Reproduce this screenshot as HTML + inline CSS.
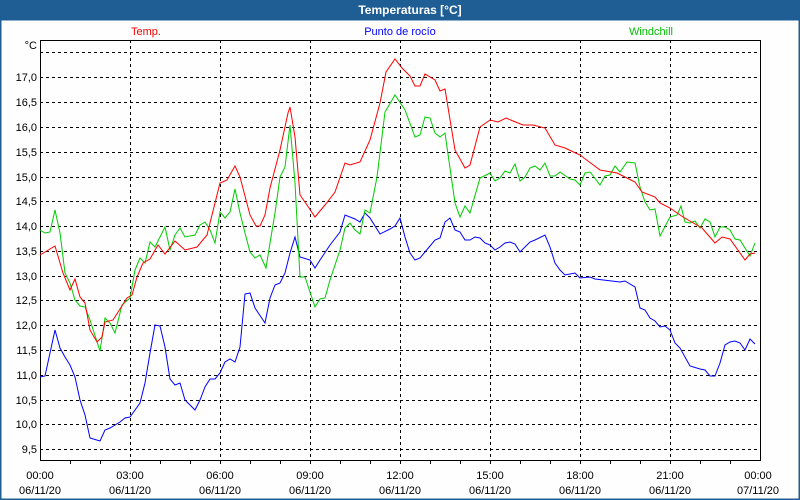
<!DOCTYPE html>
<html><head><meta charset="utf-8"><style>
html,body{margin:0;padding:0;background:#fff;}
svg{display:block;font-family:"Liberation Sans","DejaVu Sans",sans-serif;}
</style></head><body>
<svg width="800" height="500" viewBox="0 0 800 500" xmlns="http://www.w3.org/2000/svg">
<rect x="0" y="0" width="800" height="500" fill="#fdfefd"/>
<rect x="0" y="0" width="800" height="20" fill="#1e5e95"/>
<rect x="0.5" y="19.5" width="799" height="480" fill="none" stroke="#1e5e95" stroke-width="2"/>
<text x="410" y="14" fill="#fff" font-size="12" font-weight="bold" text-anchor="middle">Temperaturas [°C]</text>
<text x="146" y="35" fill="#ff0000" font-size="11" text-anchor="middle">Temp.</text>
<text x="400" y="35" fill="#0000ff" font-size="11" text-anchor="middle">Punto de rocío</text>
<text x="651" y="35" fill="#00c000" font-size="11" text-anchor="middle">Windchill</text>
<g stroke="#000" stroke-width="1" stroke-dasharray="3,3" fill="none">
<path d="M40 52.5H760M40 77.5H760M40 102.5H760M40 127.5H760M40 152.5H760M40 177.5H760M40 201.5H760M40 226.5H760M40 251.5H760M40 276.5H760M40 300.5H760M40 325.5H760M40 350.5H760M40 375.5H760M40 400.5H760M40 424.5H760M40 449.5H760"/>
<path d="M130.5 40V460M220.5 40V460M310.5 40V460M400.5 40V460M490.5 40V460M580.5 40V460M670.5 40V460"/>
</g>
<rect x="40.5" y="40.5" width="720" height="420" fill="none" stroke="#000" stroke-width="1"/>
<g stroke="#000" stroke-width="1">
<path d="M70.5 460v4M100.5 460v4M130.5 460v4M160.5 460v4M190.5 460v4M220.5 460v4M250.5 460v4M280.5 460v4M310.5 460v4M340.5 460v4M370.5 460v4M400.5 460v4M430.5 460v4M460.5 460v4M490.5 460v4M520.5 460v4M550.5 460v4M580.5 460v4M610.5 460v4M640.5 460v4M670.5 460v4M700.5 460v4M730.5 460v4"/>
</g>
<g font-size="11" fill="#000" text-anchor="end">
<text x="37" y="49">°C</text>
<text x="37" y="81">17,0</text><text x="37" y="106">16,5</text><text x="37" y="131">16,0</text>
<text x="37" y="156">15,5</text><text x="37" y="181">15,0</text><text x="37" y="205">14,5</text>
<text x="37" y="230">14,0</text><text x="37" y="255">13,5</text><text x="37" y="280">13,0</text>
<text x="37" y="304">12,5</text><text x="37" y="329">12,0</text><text x="37" y="354">11,5</text>
<text x="37" y="379">11,0</text><text x="37" y="404">10,5</text><text x="37" y="428">10,0</text>
<text x="37" y="453">9,5</text>
</g>
<g font-size="11" fill="#000" text-anchor="middle">
<text x="40" y="479">00:00</text><text x="40" y="494">06/11/20</text>
<text x="130" y="479">03:00</text><text x="130" y="494">06/11/20</text>
<text x="220" y="479">06:00</text><text x="220" y="494">06/11/20</text>
<text x="310" y="479">09:00</text><text x="310" y="494">06/11/20</text>
<text x="400" y="479">12:00</text><text x="400" y="494">06/11/20</text>
<text x="490" y="479">15:00</text><text x="490" y="494">06/11/20</text>
<text x="580" y="479">18:00</text><text x="580" y="494">06/11/20</text>
<text x="670" y="479">21:00</text><text x="670" y="494">06/11/20</text>
<text x="758" y="479">00:00</text><text x="758" y="494">07/11/20</text>
</g>
<polyline fill="none" stroke="#0000ff" stroke-width="1" points="40,377 45,376 55,330 60,348 65,357 70,365 75,377 80,400 85,415 90,438 100,441 105,430 110,428 120,422 125,418 130,417 140,403 145,383 150,353 155,325 160,326 165,347 170,379 175,385 180,383 185,400 195,410 200,400 205,387 210,379 215,379 220,373 225,362 230,359 235,362 240,347 245,294 250,293 255,308 265,323 270,298 275,285 280,283 285,273 290,253 295,237 300,257 310,260 315,268 320,260 330,245 340,232 345,215 355,219 360,222 365,213 370,218 380,234 390,229 395,226 400,218 405,237 410,253 415,260 420,258 425,252 435,240 440,238 445,222 450,218 455,230 460,232 465,240 470,240 475,237 480,238 485,243 490,245 495,250 500,247 505,243 510,242 515,244 520,252 530,242 535,240 545,235 550,247 555,263 560,270 565,275 575,273 580,278 590,277 595,279 620,282 625,281 635,287 640,308 645,310 650,318 655,321 660,327 665,326 670,330 675,343 680,348 690,366 700,369 705,370 710,376 715,376 720,363 725,345 730,342 735,341 740,343 745,350 750,339 755,344"/>
<polyline fill="none" stroke="#00cc00" stroke-width="1" points="40,230 45,233 50,232 55,210 60,233 65,273 70,283 75,300 80,306 85,307 90,320 100,351 105,318 110,323 115,333 122,305 130,298 135,270 140,258 145,263 150,242 155,247 165,227 170,250 175,235 180,228 185,237 195,235 200,225 205,222 210,230 215,243 220,212 225,218 230,212 235,189 240,213 245,233 250,252 255,258 260,255 266,268 270,243 275,213 280,177 285,167 290,125 295,183 300,277 305,277 315,307 320,299 325,298 330,280 340,250 345,228 350,223 355,230 360,234 365,210 370,213 377,177 385,112 395,95 405,110 415,137 420,135 425,117 430,118 435,133 440,137 445,133 455,203 460,217 465,206 470,213 480,178 490,173 495,181 500,178 505,171 510,173 515,164 520,181 525,177 530,168 535,166 540,170 545,163 550,176 555,176 560,172 570,179 575,180 580,185 585,173 590,172 600,185 605,176 610,175 615,166 620,172 627,162 635,163 640,187 645,202 650,210 655,209 660,236 670,217 677,215 681,206 685,222 690,223 695,221 700,228 705,219 710,222 715,237 720,227 725,227 730,230 735,239 740,240 750,256 755,243"/>
<polyline fill="none" stroke="#ff0000" stroke-width="1" points="40,255 45,252 55,246 63,273 70,290 75,279 80,297 85,303 90,330 97,342 102,337 105,322 113,320 127,298 132,295 137,277 143,263 150,259 158,245 165,254 175,241 185,250 197,247 207,235 220,183 227,180 235,166 240,177 250,215 256,226 260,226 265,215 270,188 280,150 288,113 290,107 295,137 300,195 307,205 315,217 325,205 335,192 345,163 350,165 360,162 370,140 380,103 386,72 395,59 402,68 410,76 415,86 420,86 425,74 435,80 440,91 445,89 455,150 465,168 470,165 480,127 490,120 498,122 506,118 513,121 523,125 533,125 545,128 555,145 565,148 580,155 600,170 617,173 635,182 642,192 655,197 660,203 670,208 683,217 702,228 715,243 722,237 730,239 745,260 750,254 755,253"/>
</svg>
</body></html>
